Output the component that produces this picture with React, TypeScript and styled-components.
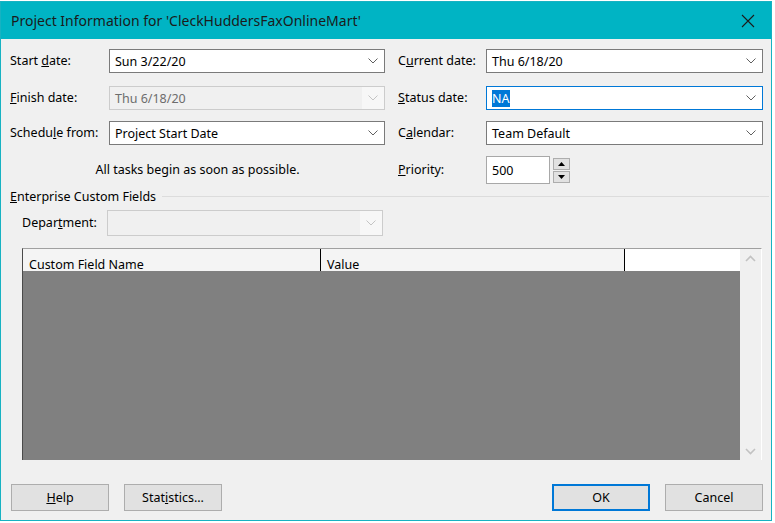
import React from 'react'
import styled, { createGlobalStyle } from 'styled-components'

const GlobalStyle = createGlobalStyle`
  html, body {
    margin: 0;
    padding: 0;
    background: #ffffff;
  }
  body {
    font-family: 'Noto Sans', 'Open Sans', sans-serif;
    font-size: 12.5px;
    color: #000;
  }
`

const Dialog = styled.div`
  margin-top: 1px;
  width: 770px;
  height: 518px;
  border: 1px solid #17b2c2;
  background: #f0f0f0;
  display: flex;
  flex-direction: column;
`

const TitleBar = styled.div`
  height: 37px;
  flex: none;
  background: #00b4c4;
  display: flex;
  align-items: center;
  justify-content: space-between;
  padding: 0 16px 0 10px;
  font-size: 14px;
  color: #1b1b1b;
`

const CloseBtn = styled.div`
  width: 14px;
  height: 14px;
  display: flex;
`

const Body = styled.div`
  flex: 1;
  display: flex;
  flex-direction: column;
  padding: 10px 8px 9px 9px;
`

const FormGrid = styled.div`
  display: grid;
  grid-template-columns: 99px 276px 13px 88px 277px;
  grid-template-rows: 37px 35px 35px 28px;
  align-items: start;
`

const Label = styled.label<{ $col: number; $h?: number }>`
  grid-column: ${({ $col }) => $col};
  white-space: nowrap;
  line-height: ${({ $h }) => $h || 24}px;
`

const Combo = styled.div<{ $disabled?: boolean; $focused?: boolean; $col: number }>`
  grid-column: ${({ $col }) => $col};
  height: 24px;
  box-sizing: border-box;
  display: flex;
  align-items: center;
  border: 1px solid ${({ $disabled, $focused }) => ($focused ? '#0078d7' : $disabled ? '#cccccc' : '#7a7a7a')};
  background: ${({ $disabled }) => ($disabled ? '#f0f0f0' : '#ffffff')};
  color: ${({ $disabled }) => ($disabled ? '#6d6d6d' : '#000')};
`

const ComboText = styled.div`
  flex: 1;
  padding-left: 5px;
  white-space: nowrap;
`

const Selected = styled.span`
  background: #0078d7;
  color: #fff;
`

const Arrow = styled.div<{ $disabled?: boolean }>`
  width: 22px;
  height: 100%;
  display: flex;
  align-items: center;
  justify-content: center;
  background: ${({ $disabled }) => ($disabled ? '#f7f7f7' : 'transparent')};
`

const Hint = styled.div`
  grid-column: 1 / 3;
  text-align: center;
  line-height: 28px;
`

const SpinWrap = styled.div`
  grid-column: 5;
  display: flex;
  align-items: center;
  gap: 3px;
`

const SpinInput = styled.div`
  width: 64px;
  height: 28px;
  box-sizing: border-box;
  border: 1px solid #a8a8a8;
  background: #fff;
  display: flex;
  align-items: center;
  padding-left: 5px;
`

const SpinButtons = styled.div`
  display: flex;
  flex-direction: column;
  gap: 1px;
`

const SpinButton = styled.div`
  width: 17px;
  height: 12px;
  box-sizing: border-box;
  border: 1px solid #adadad;
  background: #e1e1e1;
  display: flex;
  align-items: center;
  justify-content: center;
`

const GroupHeader = styled.div`
  display: flex;
  align-items: center;
  gap: 6px;
  margin-top: 4px;
  margin-right: -6px;
  height: 16px;
`

const GroupLine = styled.div`
  flex: 1;
  height: 1px;
  background: #dcdcdc;
`

const DeptRow = styled.div`
  display: flex;
  align-items: center;
  margin-top: 6px;
  padding-left: 12px;
`

const DeptLabel = styled.label`
  width: 85px;
  margin-top: -2px;
`

const DeptCombo = styled(Combo)`
  width: 276px;
  height: 26px;
`

const Table = styled.div`
  margin: 12px 0 0 12px;
  width: 740px;
  height: 212px;
  box-sizing: border-box;
  border-top: 1px solid #a0a0a0;
  border-left: 1px solid #4a4a4a;
  border-right: 1px solid #ffffff;
  display: flex;
`

const TableMain = styled.div`
  flex: 1;
  display: flex;
  flex-direction: column;
`

const HeaderRow = styled.div`
  height: 22px;
  display: flex;
  flex: none;
`

const HeaderCell = styled.div<{ $w?: number }>`
  width: ${({ $w }) => ($w ? `${$w}px` : 'auto')};
  flex: ${({ $w }) => ($w ? 'none' : '1')};
  box-sizing: border-box;
  background: ${({ $w }) => ($w ? '#f4f4f4' : '#ffffff')};
  border-right: ${({ $w }) => ($w ? '1px solid #000' : 'none')};
  padding: 9px 0 0 6px;
  line-height: 14px;
`

const GrayArea = styled.div`
  flex: 1;
  background: #808080;
`

const ScrollBar = styled.div`
  width: 21px;
  background: #f0f0f0;
  display: flex;
  flex-direction: column;
  justify-content: space-between;
  align-items: center;
  padding: 6px 0 5px;
`

const Footer = styled.div`
  margin-top: auto;
  display: flex;
  align-items: center;
  padding-left: 1px;
`

const Button = styled.button<{ $default?: boolean }>`
  width: 98px;
  height: 27px;
  box-sizing: border-box;
  font: inherit;
  color: #000;
  background: #e1e1e1;
  border: ${({ $default }) => ($default ? '2px solid #0078d7' : '1px solid #adadad')};
  padding: 0;
  margin-right: 15px;
  &:last-child {
    margin-right: 0;
  }
`

const Spacer = styled.div`
  flex: 1;
`

const Chevron = ({ disabled }: { disabled?: boolean }) => (
  <svg width="10" height="6" viewBox="0 0 10 6">
    <path d="M0.5 0.5 L5 5 L9.5 0.5" fill="none" stroke={disabled ? '#c4c4c4' : '#606060'} strokeWidth="1" />
  </svg>
)

const ScrollArrow = ({ up }: { up?: boolean }) => (
  <svg width="11" height="7" viewBox="0 0 11 7">
    <path d={up ? 'M1 6 L5.5 1.5 L10 6' : 'M1 1 L5.5 5.5 L10 1'} fill="none" stroke="#c2c2c2" strokeWidth="1.6" />
  </svg>
)

const Triangle = ({ up }: { up?: boolean }) => (
  <svg width="7" height="4" viewBox="0 0 7 4">
    <path d={up ? 'M0 4 L3.5 0 L7 4 Z' : 'M0 0 L3.5 4 L7 0 Z'} fill="#000" />
  </svg>
)

const App = () => {
  return (
    <>
      <GlobalStyle />
      <Dialog>
        <TitleBar>
          <span>Project Information for 'CleckHuddersFaxOnlineMart'</span>
          <CloseBtn>
            <svg width="14" height="14" viewBox="0 0 14 14">
              <path d="M1 1 L13 13 M13 1 L1 13" stroke="#1b1b1b" strokeWidth="1.1" />
            </svg>
          </CloseBtn>
        </TitleBar>
        <Body>
          <FormGrid>
            <Label $col={1}>Start <u>d</u>ate:</Label>
            <Combo $col={2}>
              <ComboText>Sun 3/22/20</ComboText>
              <Arrow><Chevron /></Arrow>
            </Combo>
            <Label $col={4}>C<u>u</u>rrent date:</Label>
            <Combo $col={5}>
              <ComboText>Thu 6/18/20</ComboText>
              <Arrow><Chevron /></Arrow>
            </Combo>

            <Label $col={1}><u>F</u>inish date:</Label>
            <Combo $col={2} $disabled>
              <ComboText>Thu 6/18/20</ComboText>
              <Arrow $disabled><Chevron disabled /></Arrow>
            </Combo>
            <Label $col={4}><u>S</u>tatus date:</Label>
            <Combo $col={5} $focused>
              <ComboText><Selected>NA</Selected></ComboText>
              <Arrow><Chevron /></Arrow>
            </Combo>

            <Label $col={1}>Schedu<u>l</u>e from:</Label>
            <Combo $col={2}>
              <ComboText>Project Start Date</ComboText>
              <Arrow><Chevron /></Arrow>
            </Combo>
            <Label $col={4}>C<u>a</u>lendar:</Label>
            <Combo $col={5}>
              <ComboText>Team Default</ComboText>
              <Arrow><Chevron /></Arrow>
            </Combo>

            <Hint>All tasks begin as soon as possible.</Hint>
            <Label $col={4} $h={28}><u>P</u>riority:</Label>
            <SpinWrap>
              <SpinInput>500</SpinInput>
              <SpinButtons>
                <SpinButton><Triangle up /></SpinButton>
                <SpinButton><Triangle /></SpinButton>
              </SpinButtons>
            </SpinWrap>
          </FormGrid>

          <GroupHeader>
            <span><u>E</u>nterprise Custom Fields</span>
            <GroupLine />
          </GroupHeader>

          <DeptRow>
            <DeptLabel>Depar<u>t</u>ment:</DeptLabel>
            <DeptCombo $col={1} $disabled>
              <ComboText />
              <Arrow $disabled><Chevron disabled /></Arrow>
            </DeptCombo>
          </DeptRow>

          <Table>
            <TableMain>
              <HeaderRow>
                <HeaderCell $w={298}>Custom Field Name</HeaderCell>
                <HeaderCell $w={304}>Value</HeaderCell>
                <HeaderCell />
              </HeaderRow>
              <GrayArea />
            </TableMain>
            <ScrollBar>
              <ScrollArrow up />
              <ScrollArrow />
            </ScrollBar>
          </Table>

          <Footer>
            <Button><u>H</u>elp</Button>
            <Button>Stat<u>i</u>stics...</Button>
            <Spacer />
            <Button $default>OK</Button>
            <Button>Cancel</Button>
          </Footer>
        </Body>
      </Dialog>
    </>
  )
}

export default App
